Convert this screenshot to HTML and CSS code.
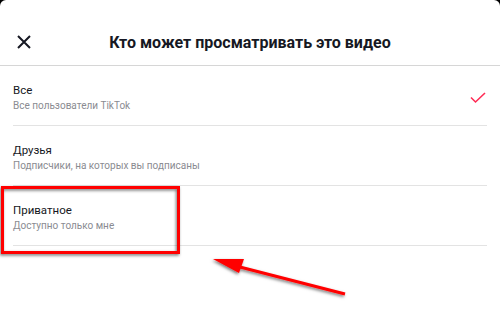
FILE: index.html
```html
<!DOCTYPE html>
<html lang="ru">
<head>
    <meta charset="UTF-8">
    <meta name="viewport" content="width=device-width, initial-scale=1.0">
    <title>Кто может просматривать это видео</title>
    <link rel="stylesheet" href="styles.css">
</head>
<body>
    <div class="sheet">
        <div class="header">
            <button class="close" aria-label="Закрыть">
                <svg width="14" height="14" viewBox="0 0 14 14">
                    <path d="M1 1 L13 13 M13 1 L1 13" stroke="#161823" stroke-width="2" fill="none"/>
                </svg>
            </button>
            <h1>Кто может просматривать это видео</h1>
        </div>

        <div class="options">
            <div class="option">
                <div class="option-text">
                    <div class="option-title">Все</div>
                    <div class="option-sub">Все пользователи TikTok</div>
                </div>
                <svg class="check" width="16" height="12" viewBox="0 0 16 12">
                    <path d="M1 5.5 L5.5 10 L15 1" stroke="#fe2c55" stroke-width="1.6" fill="none"/>
                </svg>
            </div>
            <div class="option">
                <div class="option-text">
                    <div class="option-title">Друзья</div>
                    <div class="option-sub">Подписчики, на которых вы подписаны</div>
                </div>
            </div>
            <div class="option">
                <div class="option-text">
                    <div class="option-title">Приватное</div>
                    <div class="option-sub">Доступно только мне</div>
                </div>
            </div>
        </div>
    </div>

    <!-- пометки поверх скриншота -->
    <svg class="marks" width="500" height="323" viewBox="0 0 500 323">
        <defs>
            <filter id="shade" x="-20%" y="-20%" width="140%" height="140%">
                <feDropShadow dx="-1" dy="1.5" stdDeviation="1.5" flood-color="#000" flood-opacity="0.55"/>
            </filter>
        </defs>
        <rect x="2.5" y="187.5" width="176" height="65" fill="none" stroke="#f00" stroke-width="3" filter="url(#shade)"/>
        <g filter="url(#shade)">
            <line x1="236" y1="266" x2="345" y2="294" stroke="#f00" stroke-width="3"/>
            <polygon points="213,259 244,259 239,273" fill="#f00"/>
        </g>
    </svg>
</body>
</html>
```

FILE: styles.css
```css
body {
    margin: 0;
    background: #000;
    font-family: Roboto, 'Noto Sans', sans-serif;
    color: #161823;
    overflow: hidden;
}
.sheet {
    background: white;
    border-radius: 6px 6px 0 0;
    height: 323px;
}
.header {
    height: 45px;
    padding-top: 20px;
    border-bottom: 1px solid #d6d6d6;
    display: flex;
    align-items: center;
    justify-content: center;
    position: relative;
}
.close {
    position: absolute;
    left: 16px;
    top: 34px;
    border: none;
    background: none;
    padding: 1px;
    line-height: 0;
}
.header h1 {
    margin: 0;
    font-size: 16px;
    font-weight: bold;
}
.options {
    padding: 0 13px;
}
.option {
    height: 59px;
    border-bottom: 1px solid #e3e3e3;
    display: flex;
    justify-content: space-between;
}
.option-text {
    padding-top: 16px;
}
.option-title {
    font-size: 11.5px;
    line-height: 16px;
}
.option-sub {
    font-size: 10px;
    line-height: 15px;
    color: #8a8b91;
}
.check {
    align-self: center;
    margin: 4px 1px 0 0;
}
.marks {
    position: absolute;
    left: 0;
    top: 0;
}
```
